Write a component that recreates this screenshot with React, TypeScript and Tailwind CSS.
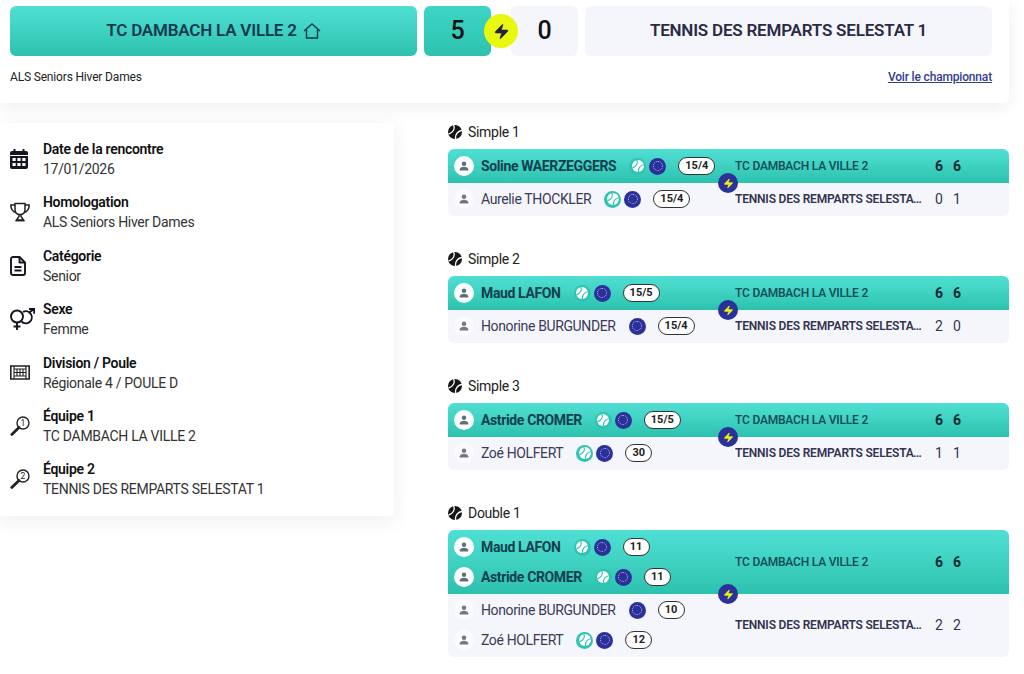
import React from 'react';
import { Zap } from 'lucide-react';

type Player = { name: string; rank: string; ball?: boolean };
type Side = { team: string; players: Player[]; scores: number[] };
type Match = { title: string; winner: Side; loser: Side };

const DAMBACH = 'TC DAMBACH LA VILLE 2';
const REMPARTS = 'TENNIS DES REMPARTS SELESTAT 1';

const matches: Match[] = [
  {
    title: 'Simple 1',
    winner: { team: DAMBACH, scores: [6, 6], players: [{ name: 'Soline WAERZEGGERS', rank: '15/4', ball: true }] },
    loser: { team: REMPARTS, scores: [0, 1], players: [{ name: 'Aurelie THOCKLER', rank: '15/4', ball: true }] },
  },
  {
    title: 'Simple 2',
    winner: { team: DAMBACH, scores: [6, 6], players: [{ name: 'Maud LAFON', rank: '15/5', ball: true }] },
    loser: { team: REMPARTS, scores: [2, 0], players: [{ name: 'Honorine BURGUNDER', rank: '15/4' }] },
  },
  {
    title: 'Simple 3',
    winner: { team: DAMBACH, scores: [6, 6], players: [{ name: 'Astride CROMER', rank: '15/5', ball: true }] },
    loser: { team: REMPARTS, scores: [1, 1], players: [{ name: 'Zoé HOLFERT', rank: '30', ball: true }] },
  },
  {
    title: 'Double 1',
    winner: {
      team: DAMBACH,
      scores: [6, 6],
      players: [
        { name: 'Maud LAFON', rank: '11', ball: true },
        { name: 'Astride CROMER', rank: '11', ball: true },
      ],
    },
    loser: {
      team: REMPARTS,
      scores: [2, 2],
      players: [
        { name: 'Honorine BURGUNDER', rank: '10' },
        { name: 'Zoé HOLFERT', rank: '12', ball: true },
      ],
    },
  },
];

const BallIcon: React.FC<{ className: string; seam: string }> = ({ className, seam }) => (
  <svg viewBox="0 0 24 24" className={className}>
    <circle cx="12" cy="12" r="12" fill="currentColor" />
    <path d="M3 3.5C9 7 10 14 5 21.5M21 2.5C15 7 14 15 20 21.5" transform="rotate(35 12 12)" fill="none" stroke={seam} strokeWidth="2.2" />
  </svg>
);

const PersonIcon: React.FC<{ className: string }> = ({ className }) => (
  <svg viewBox="0 0 24 24" fill="currentColor" className={className}>
    <circle cx="12" cy="7.5" r="4.5" />
    <path d="M3.5 21v-2.5c0-3.2 4.2-5 8.5-5s8.5 1.8 8.5 5V21z" />
  </svg>
);

const EuroBadge = () => (
  <span className="w-[17px] h-[17px] rounded-full bg-[#2b3199] flex items-center justify-center shrink-0">
    <span className="w-[10px] h-[10px] rounded-full border border-dotted border-[#b9bce8]" />
  </span>
);

const BallBadge = () => (
  <span className="w-[17px] h-[17px] rounded-full bg-[#2fc4b2] flex items-center justify-center shrink-0">
    <BallIcon className="w-3 h-3 text-white" seam="#2fc4b2" />
  </span>
);

const PlayerRow: React.FC<{ player: Player; win: boolean }> = ({ player, win }) => (
  <div className="h-[30px] flex items-center pl-[6px]">
    <span className={`w-5 h-5 rounded-full flex items-center justify-center shrink-0 ${win ? 'bg-white' : 'bg-[#fbfbfe]'}`}>
      <PersonIcon className={`w-3 h-3 ${win ? 'text-[#5f6f78]' : 'text-[#77777f]'}`} />
    </span>
    <span className={`ml-[7px] text-sm tracking-[-0.37px] ${win ? 'font-bold text-[#123f50]' : 'text-[#3b3b58]'}`}>{player.name}</span>
    <span className="ml-[13px] flex items-center gap-[3px]">
      {player.ball && <BallBadge />}
      <EuroBadge />
    </span>
    <span className="ml-3 h-[18px] px-[6px] min-w-[27px] flex items-center justify-center rounded-full bg-white border border-[#333] text-[11px] font-bold text-[#222]">
      {player.rank}
    </span>
  </div>
);

const SideRow: React.FC<{ side: Side; win: boolean }> = ({ side, win }) => (
  <div
    className={
      win
        ? 'relative flex items-center py-[2px] rounded-t-[6px] bg-gradient-to-b from-[#4fe0d4] to-[#2cc2ae]'
        : 'flex items-center pt-px pb-[2px] rounded-b-[6px] bg-[#f5f5fc]'
    }
  >
    <div className="w-[287px] shrink-0">
      {side.players.map(p => (
        <PlayerRow key={p.name} player={p} win={win} />
      ))}
    </div>
    <div className={`w-[195px] pr-[7px] shrink-0 truncate text-xs tracking-[-0.19px] font-medium ${win ? 'text-[#0f4a55]' : 'text-[#33334f] font-semibold'}`}>
      {side.team}
    </div>
    {side.scores.map((s, i) => (
      <span key={i} className={`w-[18px] text-center text-sm ${win ? 'font-bold text-[#0d2b30]' : 'text-[#33334f]'}`}>
        {s}
      </span>
    ))}
    {win && (
      <span className="absolute z-10 left-[270px] -bottom-[10px] w-5 h-5 rounded-full bg-[#2b3199] flex items-center justify-center">
        <Zap className="w-[11px] h-[11px] text-[#e8f312]" fill="currentColor" strokeWidth={1} />
      </span>
    )}
  </div>
);

const MatchBlock: React.FC<{ match: Match }> = ({ match }) => (
  <section className="mb-[34px]">
    <h3 className="h-[17px] mb-[9px] flex items-center gap-[6px] text-sm tracking-[-0.3px] font-normal text-[#222]">
      <BallIcon className="w-[14px] h-[14px] text-[#151515]" seam="#ffffff" />
      {match.title}
    </h3>
    <SideRow side={match.winner} win />
    <SideRow side={match.loser} win={false} />
  </section>
);

const icons = {
  calendar: (
    <svg viewBox="0 0 18 20" className="w-[18px] h-5 text-[#15151f]">
      <path fill="currentColor" d="M3.5 0h2v2h7V0h2v2H16a2 2 0 0 1 2 2v14a2 2 0 0 1-2 2H2a2 2 0 0 1-2-2V4a2 2 0 0 1 2-2h1.5z" />
      <path fill="#fff" d="M0 6h18v1H0zM2.5 9h3.2v3H2.5zM7.4 9h3.2v3H7.4zM12.3 9h3.2v3h-3.2zM2.5 14h3.2v3H2.5zM7.4 14h3.2v3H7.4zM12.3 14h3.2v3h-3.2z" />
    </svg>
  ),
  trophy: (
    <svg viewBox="0 0 20 20" fill="none" stroke="currentColor" strokeWidth="1.5" className="w-5 h-5 text-[#222]">
      <path d="M5 1.5h10v6c0 3-2 5-5 5s-5-2-5-5z" />
      <path d="M5 3H.8c0 4 1.5 6.5 5.2 7.5M15 3h4.2c0 4-1.5 6.5-5.2 7.5" />
      <path d="M9 12.5v2L6.5 18h7L11 14.5v-2" />
      <path d="M5.5 18.7h9" />
    </svg>
  ),
  doc: (
    <svg viewBox="0 0 16 20" fill="none" stroke="currentColor" strokeWidth="1.9" className="w-4 h-5 text-[#15151f]">
      <path d="M3 1h6.5L15 6.5V17a2 2 0 0 1-2 2H3a2 2 0 0 1-2-2V3a2 2 0 0 1 2-2z" strokeLinejoin="round" />
      <path d="M9.5 1v5.5H15" strokeLinejoin="round" />
      <path d="M4.5 11h7M4.5 14.5h7" />
    </svg>
  ),
  gender: (
    <svg viewBox="0 0 25 22" fill="none" stroke="currentColor" strokeWidth="1.9" className="w-[25px] h-[22px] text-[#15151f]">
      <circle cx="7" cy="8.5" r="6" />
      <path d="M7 14.5V22M3.5 18.5h7" />
      <path d="M13 4a6 6 0 1 1-1.5 9.5" />
      <path d="M18.5 5L24 .9M19 1h5.2v4.8" />
    </svg>
  ),
  net: (
    <svg viewBox="0 0 20 15" fill="none" stroke="currentColor" strokeWidth="1.6" className="w-5 h-[15px] text-[#222]">
      <path d="M.8 1h18.4v13H.8z" />
      <path d="M4 1v13M16 1v13M10 4v7M7 4v7M13 4v7M4 4h12M4 7.5h12M4 11h12" strokeWidth="1.1" />
    </svg>
  ),
  racket: (n: number) => (
    <svg viewBox="0 0 20 20" className="w-5 h-5 text-[#222]">
      <circle cx="13" cy="7" r="6" fill="#fff" stroke="currentColor" strokeWidth="1.4" />
      <path d="M9 11.5L1.8 18.4" stroke="currentColor" strokeWidth="2.8" strokeLinecap="round" />
      <text x="13" y="10" textAnchor="middle" fontSize="8.5" fontFamily="Roboto" fill="currentColor">{n}</text>
    </svg>
  ),
};

const infos: { icon: React.ReactNode; title: string; value: string }[] = [
  { icon: icons.calendar, title: 'Date de la rencontre', value: '17/01/2026' },
  { icon: icons.trophy, title: 'Homologation', value: 'ALS Seniors Hiver Dames' },
  { icon: icons.doc, title: 'Catégorie', value: 'Senior' },
  { icon: icons.gender, title: 'Sexe', value: 'Femme' },
  { icon: icons.net, title: 'Division / Poule', value: 'Régionale 4 / POULE D' },
  { icon: icons.racket(1), title: 'Équipe 1', value: DAMBACH },
  { icon: icons.racket(2), title: 'Équipe 2', value: REMPARTS },
];

const App: React.FC = () => (
  <div className="h-[674px] overflow-hidden bg-white font-['Roboto',sans-serif]">
    <header className="w-[1009px] h-[103px] pl-[10px] pr-[17px] pt-[6px] bg-white rounded-br-[6px] shadow-[0_4px_16px_rgba(40,40,90,0.08)]">
      <div className="relative flex h-[50px]">
        <div className="w-[407px] rounded-[6px] bg-gradient-to-b from-[#4fe0d4] to-[#2cc2ae] flex items-center justify-center gap-[6px] text-[17px] tracking-[-0.2px] font-semibold text-[#12394f]">
          TC DAMBACH LA VILLE 2
          <svg viewBox="0 0 18 18" fill="none" stroke="currentColor" strokeWidth="1.4" className="w-[18px] h-[18px]">
            <path d="M1 9l8-7 8 7M3.5 7.5V16h11V7.5" />
          </svg>
        </div>
        <div className="ml-[7px] w-[67px] rounded-[6px] bg-gradient-to-b from-[#3fd5c6] to-[#2cc2ae] flex items-center justify-center text-[25px] font-medium text-[#111]">5</div>
        <div className="ml-5 w-[67px] rounded-[6px] bg-[#f5f5fc] flex items-center justify-center text-[25px] font-medium text-[#111]">0</div>
        <div className="ml-[7px] w-[407px] rounded-[6px] bg-[#f5f5fc] flex items-center justify-center text-[17px] tracking-[-0.2px] font-semibold text-[#2b2b45]">{REMPARTS}</div>
        <span className="absolute left-[474px] top-[8px] w-[34px] h-[34px] rounded-full bg-[#e8f80f] flex items-center justify-center">
          <Zap className="w-[17px] h-[17px] text-[#23233a]" fill="currentColor" strokeWidth={1} />
        </span>
      </div>
      <div className="mt-[13px] flex items-center justify-between text-xs tracking-[-0.17px]">
        <span className="text-[#222]">ALS Seniors Hiver Dames</span>
        <a className="font-medium underline text-[#343d8f]">Voir le championnat</a>
      </div>
    </header>

    <div className="flex items-start mt-5">
      <aside className="w-[394px] shrink-0 pl-[10px] pt-4 pb-[17px] bg-white rounded-r-[4px] shadow-[0_4px_20px_rgba(40,40,90,0.08)] flex flex-col gap-[13.4px]">
        {infos.map(info => (
          <div key={info.title} className="flex items-center">
            <span className="w-[33px] flex shrink-0">{info.icon}</span>
            <div className="text-sm tracking-[-0.3px] leading-5">
              <p className="font-semibold text-[#111]">{info.title}</p>
              <p className="text-[#333]">{info.value}</p>
            </div>
          </div>
        ))}
      </aside>
      <main className="ml-[54px] w-[561px]">
        {matches.map(m => (
          <MatchBlock key={m.title} match={m} />
        ))}
      </main>
    </div>
  </div>
);

export default App;
